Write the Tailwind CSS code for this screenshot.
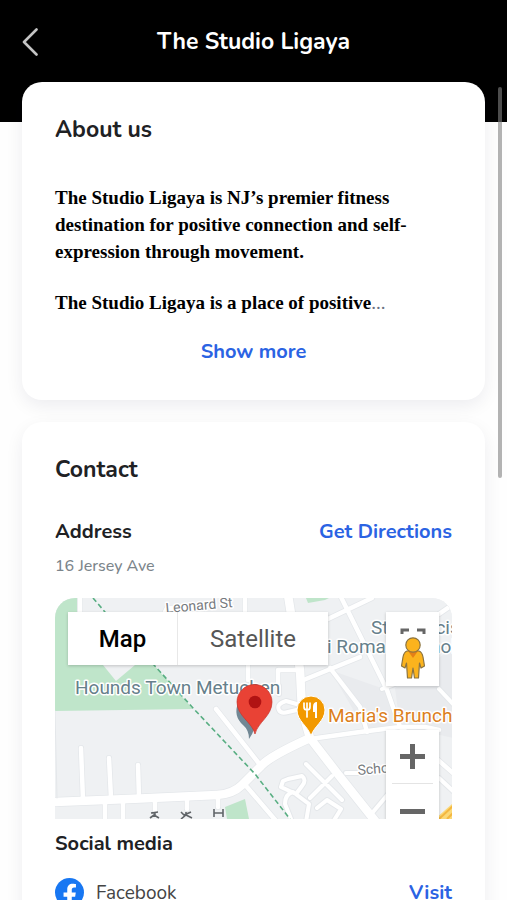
<!DOCTYPE html>
<html lang="en">
<head>
<meta charset="utf-8">
<meta name="viewport" content="width=device-width, initial-scale=1">
<title>The Studio Ligaya</title>
<script src="https://cdn.jsdelivr.net/npm/@tailwindcss/browser@4"></script>
</head>
<body class="relative h-screen overflow-hidden bg-[#fefefe] font-['Nunito','Open_Sans',sans-serif] text-[#202124]">
<header class="flex h-[122px] items-start bg-black px-4 pt-5">
  <button type="button" aria-label="Back" class="flex h-11 w-8 shrink-0 items-center justify-start pl-1.5 text-[#c4c4c4]">
    <svg class="h-7 w-4" viewBox="0 0 16 28" fill="none" stroke="currentColor" stroke-width="2.6" stroke-linecap="round" stroke-linejoin="round" aria-hidden="true"><path d="M14.500 1.500 2 14 14.500 26.500"/></svg>
  </button>
  <h1 class="mr-8 grow text-center text-[23px] leading-[44px] font-bold text-white">The Studio Ligaya</h1>
</header>

<main class="relative -mt-10 flex flex-col gap-[22px] px-[22px]">
  <section class="rounded-[20px] bg-white px-[33px] pt-8 pb-8 shadow-[0_6px_18px_rgba(20,20,50,0.07)]">
    <h2 class="text-[23px] leading-8 font-bold">About us</h2>
    <div class="mt-[38px] font-['Liberation_Serif',serif] text-[19px] leading-[27px] font-bold text-black">
      <p>The Studio Ligaya is NJ’s premier fitness destination for positive connection and self-expression through movement.</p>
      <p class="mt-6">The Studio Ligaya is a place of positive<span class="font-normal text-gray-500">...</span></p>
    </div>
    <button type="button" class="mx-auto mt-5 block text-[20px] leading-8 font-bold text-[#2b63e3]">Show more</button>
  </section>

  <section class="rounded-[20px] bg-white px-[33px] pt-8 pb-8 shadow-[0_6px_18px_rgba(20,20,50,0.07)]">
    <h2 class="text-[23px] leading-8 font-bold">Contact</h2>
    <div class="mt-8 flex items-center justify-between text-[20px] leading-7 font-bold">
      <h3>Address</h3>
      <a href="#directions" class="text-[#2b63e3]">Get Directions</a>
    </div>
    <p class="mt-2 text-[16px] leading-6 font-medium text-[#7c858b]">16 Jersey Ave</p>

    <div class="relative mt-5 h-[221px] overflow-hidden rounded-t-[20px] bg-[#eff1f3] font-['Roboto',sans-serif]">
      <svg class="h-full w-full" viewBox="0 0 398 221" preserveAspectRatio="xMinYMin slice" role="img" aria-label="Map around 16 Jersey Ave">
        <rect width="398" height="221" fill="#eff1f3"/>
        <path fill="#e9ebee" d="M275 72 332 92 345 127 310 132ZM340 90 398 50V140L345 128Z"/>
        <g fill="#bfe5ca">
          <path d="M0 0H23L25 40 48 67 61 83 80 67 90 57 138 111 0 113Z"/>
          <path d="M251 0H274L270 2 253 5Z"/>
          <path d="M170 209 190 201 194 221H172Z"/>
        </g>
        <g fill="none" stroke-linejoin="round" stroke-linecap="round">
          <g stroke="#e4e7ea">
            <path stroke-width="10" d="M-3 204Q80 201 162 197Q178 196 187 187L206 168Q215 158 255 140L282 175 321 224M233-3 245 72 247 112 255 140"/>
            <path stroke-width="6" d="M255 141 305 134 345 129 370 129 384 132M285-3 332 92 345 129 398 175M317 0 275 20 245 35M246 83 305 59M275 70 305 109 312 134M161 111 206 168M192 189 222 224M26 150 28 202M54 160 56 200M83 167 84 200M50 205V224M68 205V224M100 203V213M132 202V211M163 200V209M25-3V16M223 72H245M223 72V88M397 7 384 16M109 16 112 10H143M193 67V82M190-3V16"/>
            <path stroke-width="6" d="M291 175H305M318 214 334 195M327 91 345 84M384 180 398 193M245 107 231 103Q221 106 224 112Q226 116 233 114L246 111M224 88V96M233 181 247 178Q252 182 247 188L241 196 226 189 228 183ZM251 166 287 202M277 178 255 200M236 221 230 206Q230 196 238 194L254 206 251 224M262 210 272 202 286 211 278 224M384 91 398 106"/>
          </g>
          <g stroke="#fff">
            <path stroke-width="8.500" d="M-3 204Q80 201 162 197Q178 196 187 187L206 168Q215 158 255 140L282 175 321 224M233-3 245 72 247 112 255 140"/>
            <path stroke-width="4.500" d="M255 141 305 134 345 129 370 129 384 132M285-3 332 92 345 129 398 175M317 0 275 20 245 35M246 83 305 59M275 70 305 109 312 134M161 111 206 168M192 189 222 224M26 150 28 202M54 160 56 200M83 167 84 200M50 205V224M68 205V224M100 203V213M132 202V211M163 200V209M25-3V16M223 72H245M223 72V88M397 7 384 16M109 16 112 10H143M193 67V82M190-3V16"/>
            <path stroke-width="4" d="M291 175H305M318 214 334 195M327 91 345 84M384 180 398 193M245 107 231 103Q221 106 224 112Q226 116 233 114L246 111M224 88V96M233 181 247 178Q252 182 247 188L241 196 226 189 228 183ZM251 166 287 202M277 178 255 200M236 221 230 206Q230 196 238 194L254 206 251 224M262 210 272 202 286 211 278 224M384 91 398 106"/>
          </g>
          <path stroke="#e4e7ea" d="M0 113 2 200"/>
          <path stroke="#58ae82" stroke-width="1.6" stroke-linecap="butt" stroke-dasharray="5 3" d="M38 0 50 14 99 67 138 110 200 176 235 221"/>
        </g>
        <path fill="#fbd978" d="M380 221 398 205V221Z"/><path d="M384 221 398 208M392 221 398 215" stroke="#f4b740" stroke-width="2"/>
        <g stroke="#606468" stroke-width="1.6" fill="none"><path d="M96 215 103 214M100 214V218M95 220 99 217 104 220M126 214 129 217 136 214M131 214V218M126 221 131 217 137 220M159 211V219M168 211V219M159 215H168"/></g>
        <g stroke="#fff" stroke-width="3" stroke-linejoin="round" paint-order="stroke" fill="#66808b" font-size="19">
          <text x="20" y="96">Hounds Town Metuchen</text>
          <text x="316" y="36">St. Francis</text>
          <text x="272" y="55">i Roman Cathol</text>
          <text x="273" y="124" fill="#dc801d">Maria's Brunch</text>
          <g fill="#777b80" font-size="14">
            <text transform="translate(111 15) rotate(-5)">Leonard St</text>
            <text transform="translate(303 177) rotate(-5)">School St</text>
          </g>
        </g>
        <path fill="#718794" d="M183 105Q178 118 188 127 194 132 194 141 201 132 199 122L190 103Z"/>
        <path fill="#e94235" stroke="#c9352b" stroke-width=".7" d="M200 136C197 124 182 118 182 104A17.5 17.5 0 0 1 217 104C217 118 203 124 200 136Z"/>
        <circle cx="200" cy="104" r="6.3" fill="#b11313"/>
        <path fill="#f29900" stroke="#fff" stroke-width="1" d="M256 138C253 128 242 123 242 112A14 14 0 0 1 270 112C270 123 259 128 256 138Z"/>
        <path fill="none" stroke="#fff" stroke-width="1.7" stroke-linecap="round" d="M249 105V109Q249 112 252 112T255 109V105M252 105V119"/>
        <path fill="#fff" d="M258 109Q258 104 262 104V120H260V114H258Z"/>
      </svg>

      <div class="absolute top-[14px] left-[13px] flex h-[53px] w-[260px] bg-white text-[24px] shadow-[0_1px_3px_rgba(0,0,0,0.2)]">
        <button type="button" class="w-[110px] border-r border-[#e8e8e8] font-medium text-black">Map</button>
        <button type="button" class="grow text-[#565656]">Satellite</button>
      </div>
      <div class="absolute top-[14px] right-[13px] flex h-[74px] w-[53px] flex-col items-center bg-white pt-[14px] shadow-[0_1px_3px_rgba(0,0,0,0.2)]">
        <button type="button" aria-label="Toggle fullscreen view" class="h-[10px] w-full shrink-0">
          <svg class="mx-auto block h-[6px] w-[26px]" viewBox="0 0 26 6" fill="none" stroke="#666" stroke-width="3" aria-hidden="true"><path d="M2 6V2H9M17 2H24V6"/></svg>
        </button>
        <button type="button" aria-label="Street View" class="w-full">
          <svg class="mx-auto block h-[44px] w-[26px]" viewBox="0 0 26 44" fill="#fbb31d" stroke="#8c7440" stroke-width="1.2" stroke-linejoin="round" aria-hidden="true">
            <path d="M7 15H19Q22 16 23 21L24.500 30 21 32 19.500 27 18.500 42H14.500L13 32 11.500 42H7.500L6.500 27 5 32 1.500 30 3 21Q4 16 7 15Z"/>
            <path fill="#e58016" stroke="none" d="M8 15H18L13 22Z"/>
            <circle cx="13" cy="9" r="7.200"/>
          </svg>
        </button>
      </div>
      <div class="absolute top-[132px] right-[13px] flex h-[108px] w-[53px] flex-col bg-white px-[6px] shadow-[0_1px_3px_rgba(0,0,0,0.2)]">
        <button type="button" aria-label="Zoom in" class="h-[54px] w-full border-b border-[#e4e4e4]">
          <svg class="mx-auto block h-[25px] w-[25px]" viewBox="0 0 25 25" fill="#666" aria-hidden="true"><path d="M10 0H15V10H25V15H15V25H10V15H0V10H10Z"/></svg>
        </button>
        <button type="button" aria-label="Zoom out" class="h-[54px] w-full">
          <svg class="mx-auto block h-[5px] w-[25px]" viewBox="0 0 25 5" fill="#666" aria-hidden="true"><path d="M0 0H25V5H0Z"/></svg>
        </button>
      </div>
    </div>

    <h3 class="mt-[11px] text-[20px] leading-7 font-bold">Social media</h3>
    <div class="mt-5 flex items-center">
      <svg class="h-[29px] w-[29px] shrink-0" viewBox="0 0 24 24" aria-hidden="true"><circle cx="12" cy="12" r="12" fill="#1877f2"/><path fill="#fff" d="M16.670 15.470 17.200 12H13.880V9.750C13.880 8.800 14.340 7.870 15.830 7.870H17.340V4.920S15.970 4.690 14.660 4.690C11.920 4.690 10.130 6.350 10.130 9.360V12H7.080V15.470H10.130V23.860A12 12 0 0 0 13.880 23.860V15.470Z"/></svg>
      <span class="ml-3 text-[19px] leading-7 text-[#444]">Facebook</span>
      <a href="#facebook" class="ml-auto text-[20px] leading-7 font-bold text-[#2b63e3]">Visit</a>
    </div>
  </section>
</main>
<div class="absolute top-[87px] right-[5px] h-[391px] w-1 rounded-full bg-[#808080]/60" aria-hidden="true"></div>
</body>
</html>
